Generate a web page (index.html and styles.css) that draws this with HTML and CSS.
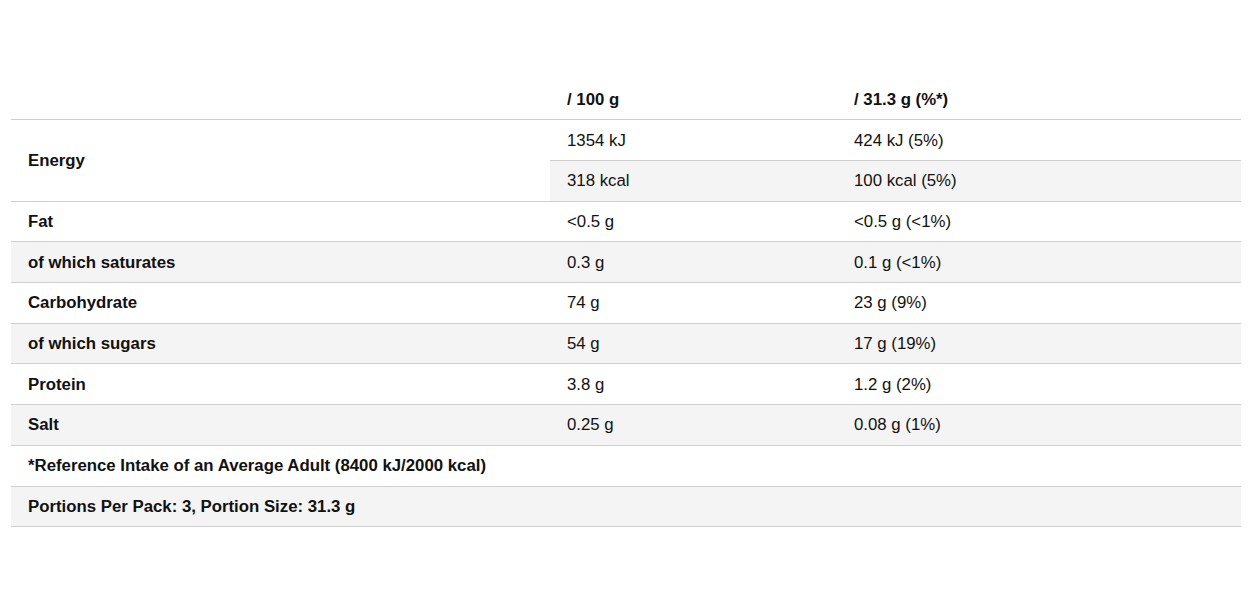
FILE: index.html
```html
<!DOCTYPE html>
<html>
<head>
<meta charset="utf-8">
<link rel="stylesheet" href="styles.css">
</head>
<body>
<div class="page">
<table class="nutrition">
  <colgroup>
    <col class="c1"><col class="c2"><col class="c3">
  </colgroup>
  <thead>
    <tr class="row">
      <th></th>
      <th>/ 100 g</th>
      <th>/ 31.3 g (%*)</th>
    </tr>
  </thead>
  <tbody>
    <tr class="row">
      <th rowspan="2" class="label">Energy</th>
      <td>1354 kJ</td>
      <td>424 kJ (5%)</td>
    </tr>
    <tr class="row shade">
      <td>318 kcal</td>
      <td>100 kcal (5%)</td>
    </tr>
    <tr class="row">
      <th class="label">Fat</th>
      <td>&lt;0.5 g</td>
      <td>&lt;0.5 g (&lt;1%)</td>
    </tr>
    <tr class="row shade">
      <th class="label">of which saturates</th>
      <td>0.3 g</td>
      <td>0.1 g (&lt;1%)</td>
    </tr>
    <tr class="row">
      <th class="label">Carbohydrate</th>
      <td>74 g</td>
      <td>23 g (9%)</td>
    </tr>
    <tr class="row shade">
      <th class="label">of which sugars</th>
      <td>54 g</td>
      <td>17 g (19%)</td>
    </tr>
    <tr class="row">
      <th class="label">Protein</th>
      <td>3.8 g</td>
      <td>1.2 g (2%)</td>
    </tr>
    <tr class="row shade">
      <th class="label">Salt</th>
      <td>0.25 g</td>
      <td>0.08 g (1%)</td>
    </tr>
    <tr class="row">
      <th class="label" colspan="3">*Reference Intake of an Average Adult (8400 kJ/2000 kcal)</th>
    </tr>
    <tr class="row shade">
      <th class="label" colspan="3">Portions Per Pack: 3, Portion Size: 31.3 g</th>
    </tr>
  </tbody>
</table>
</div>
</body>
</html>
```

FILE: styles.css
```css
html, body {
  margin: 0;
  padding: 0;
  background: #ffffff;
}

.page {
  padding: 79.5px 17px 0 11px;
}

.nutrition {
  width: 1230px;
  border-collapse: collapse;
  table-layout: fixed;
  font-family: "Liberation Sans", Arial, sans-serif;
  font-size: 16.8px;
  color: #111111;
}

.c1 { width: 539px; }
.c2 { width: 287px; }
.c3 { width: 404px; }

.nutrition th,
.nutrition td {
  text-align: left;
  padding: 11.3px 16px 11px 17px;
  line-height: 17.4px;
  height: 17.4px;
  border-bottom: 1px solid #cfcfcf;
  vertical-align: middle;
  white-space: nowrap;
}

.nutrition th {
  font-weight: bold;
}

.nutrition td {
  font-weight: normal;
}

.shade td,
.shade th {
  background: #f4f4f4;
}
```
